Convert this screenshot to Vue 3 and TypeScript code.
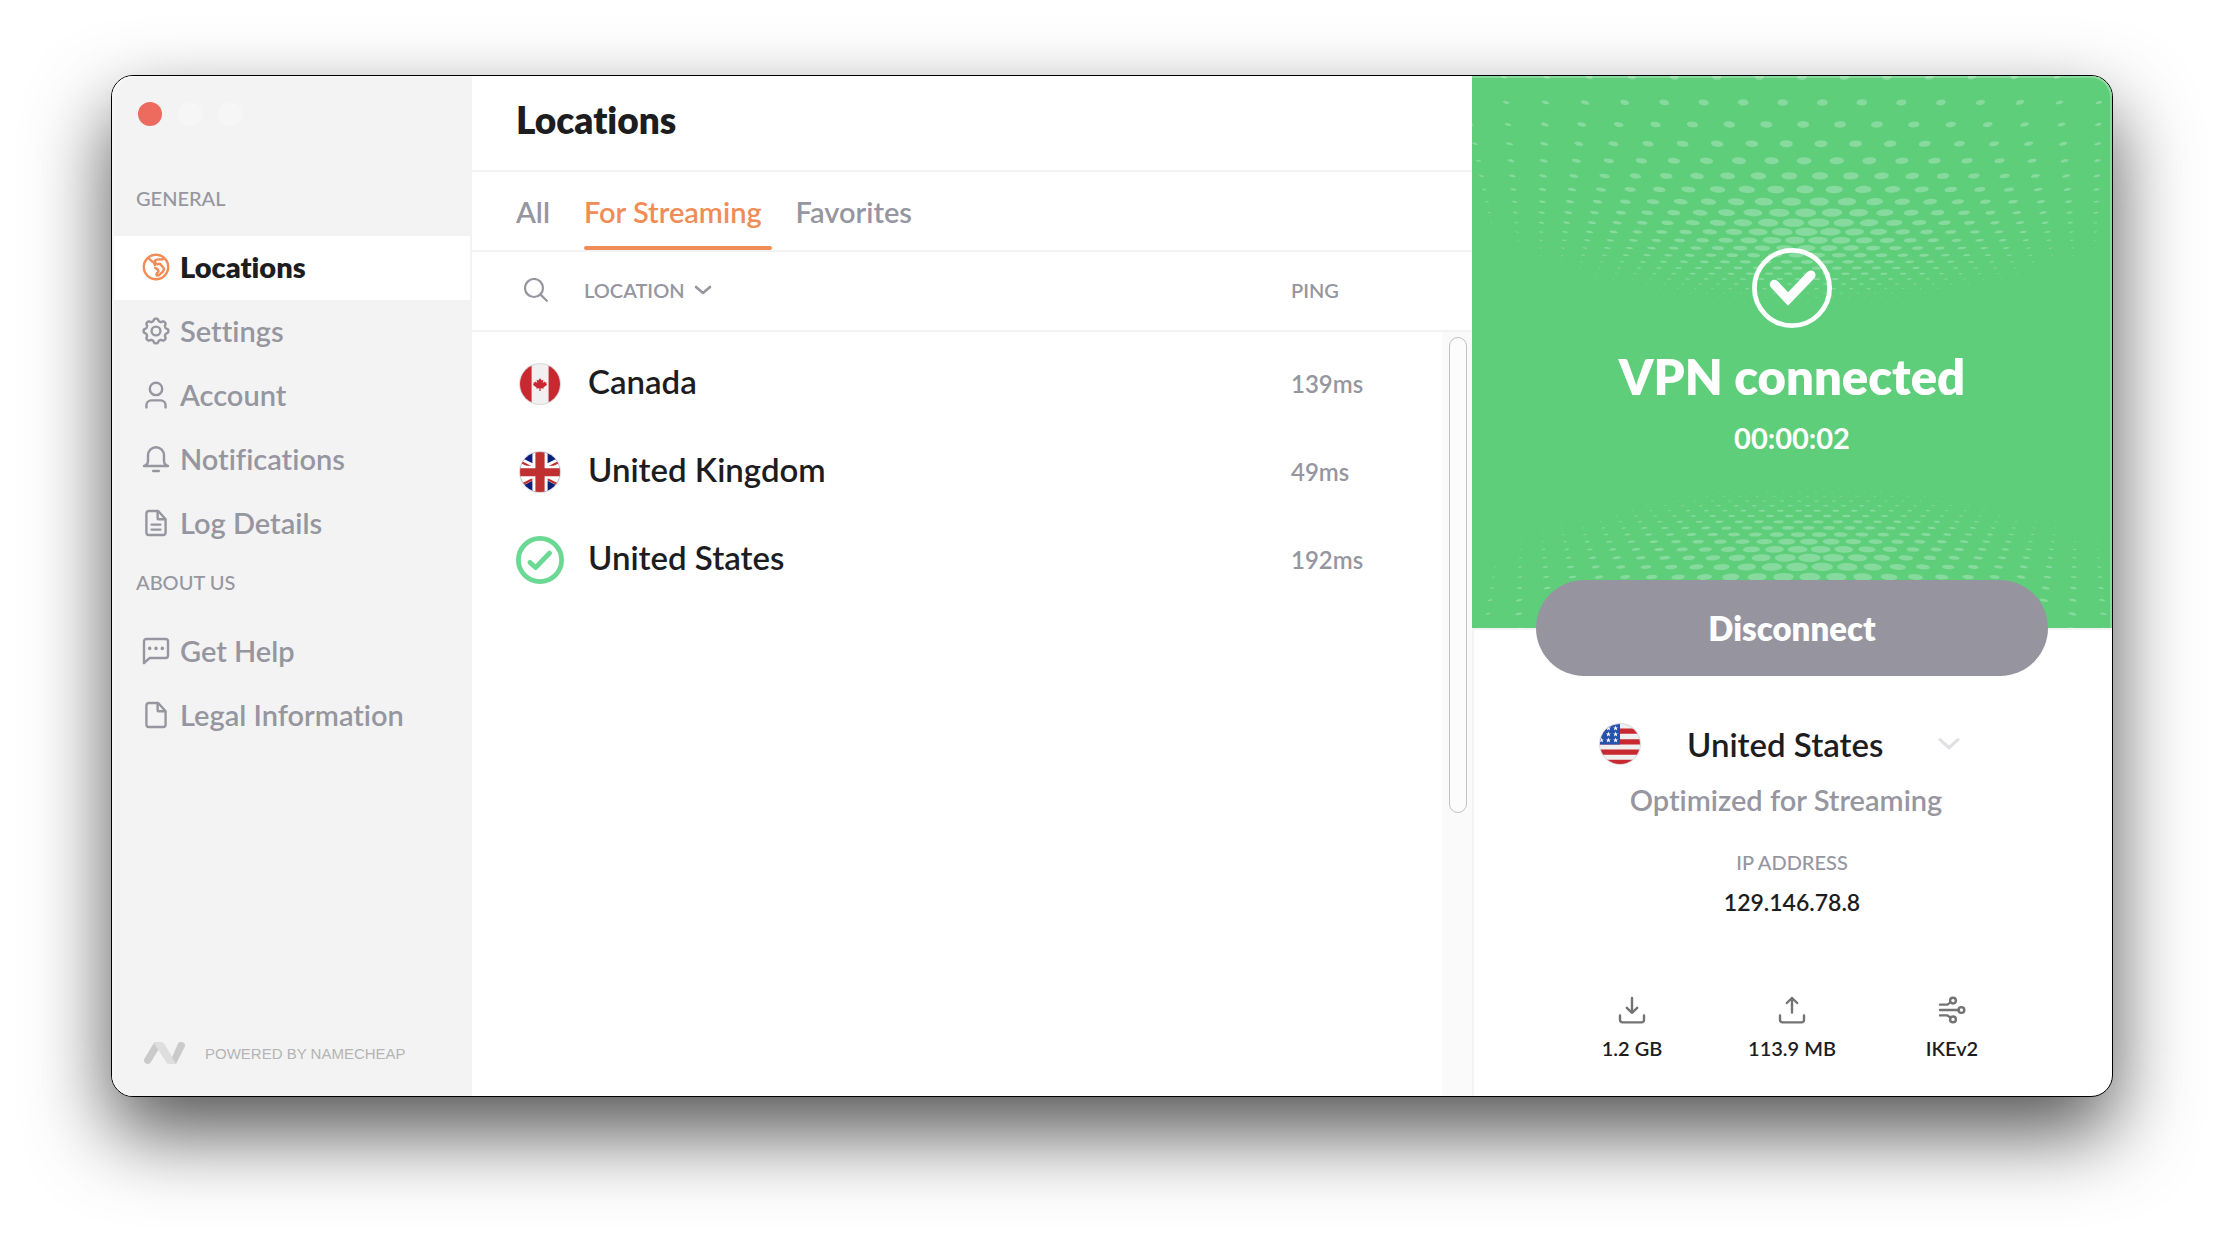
<script setup lang="ts">
import { ref } from 'vue'

interface NavItem {
  id: string
  label: string
}

interface Server {
  id: string
  name: string
  ping: string
}

interface Dot {
  key: string
  matrix: string
}

const generalItems: NavItem[] = [
  { id: 'globe', label: 'Locations' },
  { id: 'gear', label: 'Settings' },
  { id: 'user', label: 'Account' },
  { id: 'bell', label: 'Notifications' },
  { id: 'log', label: 'Log Details' },
]

const aboutItems: NavItem[] = [
  { id: 'chat', label: 'Get Help' },
  { id: 'file', label: 'Legal Information' },
]

const sections = [
  { title: 'General', items: generalItems },
  { title: 'About us', items: aboutItems },
]

const tabs = ['All', 'For Streaming', 'Favorites']

const servers: Server[] = [
  { id: 'ca', name: 'Canada', ping: '139ms' },
  { id: 'uk', name: 'United Kingdom', ping: '49ms' },
  { id: 'on', name: 'United States', ping: '192ms' },
]

const stats = [
  { id: 'down', label: '1.2 GB' },
  { id: 'up', label: '113.9 MB' },
  { id: 'proto', label: 'IKEv2' },
]

const activeItem = ref('globe')
const activeTab = ref('For Streaming')

// Outline of the cog: a circle whose radius swells eight times per turn.
function gearOutline(): string {
  const points: string[] = []
  for (let i = 0; i < 160; i++) {
    const t = (i / 160) * Math.PI * 2
    const wave = Math.tanh(1.6 * Math.cos(8 * t)) / Math.tanh(1.6)
    const r = 11.2 + 1.2 * wave
    points.push(`${(14 + r * Math.sin(t)).toFixed(2)} ${(14 - r * Math.cos(t)).toFixed(2)}`)
  }
  return `M${points.join('L')}Z`
}

const gearPath = gearOutline()

// Dot size, as a share of the grid step, by distance from the focus.
const falloff: [number, number][] = [
  [0, 0.94], [2, 0.8], [4, 0.6], [5, 0.52], [7, 0.38], [9, 0.27], [12, 0.12], [15, 0],
]

function dotShare(d: number): number {
  for (let i = 1; i < falloff.length; i++) {
    const [d0, f0] = falloff[i - 1]
    const [d1, f1] = falloff[i]
    if (d <= d1) return f0 + ((f1 - f0) * (d - d0)) / (d1 - d0)
  }
  return 0
}

// Round dots on a plane that recedes towards a horizon.
function dotPlane(): Dot[] {
  const horizon = 358
  const vanishX = 340
  const step = 0.1192
  const depth = 0.0002147
  const dots: Dot[] = []
  for (let n = 0; n < 26; n++) {
    const h = 1 / (0.0028011 + depth * n)
    const slope = depth * h * h
    const shift = n % 2 === 0 ? -0.24 : 0.26
    for (let c = -15; c <= 15; c++) {
      const u = c + shift
      const r = dotShare(Math.hypot(u + 0.2, n - 10)) / 2
      if (r < 0.012) continue
      const m = [step * h * r, 0, -step * u * slope * r, slope * r, vanishX + step * u * h, horizon - h]
      dots.push({ key: `${n}:${c}`, matrix: `matrix(${m.map((v) => v.toFixed(2)).join(' ')})` })
    }
  }
  return dots
}

const dots = dotPlane()
</script>

<template>
  <div class="desktop">
    <div class="window">
      <aside class="sidebar">
        <div class="lights">
          <span class="light close"></span>
          <span class="light"></span>
          <span class="light"></span>
        </div>
        <nav>
          <section v-for="section in sections" :key="section.title">
            <h2 class="group">{{ section.title }}</h2>
            <ul>
              <li v-for="item in section.items" :key="item.id">
                <a href="#" class="nav" :class="{ active: item.id === activeItem }" @click.prevent="activeItem = item.id">
                  <svg class="icon" viewBox="0 0 28 28" aria-hidden="true">
                    <g v-if="item.id === 'globe'">
                      <circle cx="14" cy="14" r="12.2" />
                      <path d="M6.4 5.2 10 8.4Q12.2 9 12.8 12M20.8 6.2 14.4 6.6Q12.8 7 13.2 8.8 13.8 11.4 15.4 11.2L18 10.8 22 15.6Q22 18.6 18.8 20.4 16.4 23.4 14.6 22.2 14 20.4 16.4 18.6 16.6 16.2 13.2 14.8" />
                    </g>
                    <g v-else-if="item.id === 'gear'">
                      <path :d="gearPath" />
                      <circle cx="14" cy="14" r="4.4" />
                    </g>
                    <g v-else-if="item.id === 'user'">
                      <circle cx="14" cy="7.9" r="6.2" />
                      <path d="M4.4 26.4V24.4a5 5 0 0 1 5-5h9.2a5 5 0 0 1 5 5v2" />
                    </g>
                    <g v-else-if="item.id === 'bell'">
                      <path d="M2 21Q6 19.6 6 16V10.2a8 8 0 0 1 16 0V16Q22 19.6 26 21ZM11.2 26h5.6" />
                    </g>
                    <g v-else-if="item.id === 'log' || item.id === 'file'">
                      <path d="M6.8 2h9.4l7.4 8.2V23.6a2.4 2.4 0 0 1-2.4 2.4H6.8a2.4 2.4 0 0 1-2.4-2.4V4.4A2.4 2.4 0 0 1 6.8 2ZM15.6 2.4V9.2a1 1 0 0 0 1 1h6.6" />
                      <path v-if="item.id === 'log'" d="M9.6 15.6h8.8M9.6 20.6h8.8" />
                    </g>
                    <g v-else>
                      <path d="M2 26.2V4.4A2.4 2.4 0 0 1 4.4 2h19.2A2.4 2.4 0 0 1 26 4.4V18.6A2.4 2.4 0 0 1 23.6 21H8.4Q7.4 21 6.6 21.8Z" />
                      <path class="solid" d="M7.7 9.6a1.8 1.8 0 1 0 .01 0ZM14 9.6a1.8 1.8 0 1 0 .01 0ZM20.3 9.6a1.8 1.8 0 1 0 .01 0Z" />
                    </g>
                  </svg>
                  <span>{{ item.label }}</span>
                </a>
              </li>
            </ul>
          </section>
        </nav>
        <footer class="powered">
          <svg class="brand" viewBox="0 0 41 22" aria-hidden="true">
            <path d="M3.8 18.2 12.6 3.6" stroke="#cacaca" stroke-width="7.4" stroke-linecap="round" />
            <path d="M10.4 0H17c1.6 0 3 .9 3.8 2.4L32.4 22h-7.2c-1.6 0-2.6-.8-3.4-2.2L13.4 6.6C12.6 5 10.2 3 10.4 0Z" fill="#dedede" />
            <path d="M33.9 1.9a3.7 3.7 0 0 1 6.6 3.4L32 22l-4-6.8Z" fill="#cacaca" />
          </svg>
          <span>POWERED BY NAMECHEAP</span>
        </footer>
      </aside>

      <main class="content">
        <header class="heading">
          <h1>Locations</h1>
        </header>
        <div class="tabs" role="tablist">
          <button
            v-for="tab in tabs"
            :key="tab"
            type="button"
            role="tab"
            class="tab"
            :class="{ current: tab === activeTab }"
            :aria-selected="tab === activeTab"
            @click="activeTab = tab"
          >
            {{ tab }}
          </button>
        </div>
        <div class="list">
          <table>
            <thead>
              <tr>
                <th class="col-icon">
                  <button type="button" class="search" aria-label="Search">
                    <svg viewBox="0 0 24 24" aria-hidden="true"><circle cx="10" cy="10" r="9" /><path d="M16.6 16.6 22.8 22.8" /></svg>
                  </button>
                </th>
                <th>
                  <button type="button" class="sort">
                    LOCATION
                    <svg viewBox="0 0 18 10" aria-hidden="true"><path d="M2 2 9 8 16 2" /></svg>
                  </button>
                </th>
                <th class="col-ping">PING</th>
              </tr>
            </thead>
            <tbody>
              <tr v-for="server in servers" :key="server.id">
                <td class="mark">
                  <svg v-if="server.id === 'ca'" class="flag" viewBox="0 0 42 42" aria-hidden="true">
                    <clipPath id="clip-ca"><circle cx="21" cy="21" r="20" /></clipPath>
                    <circle cx="21" cy="21" r="21" fill="#d9d9d9" />
                    <g clip-path="url(#clip-ca)">
                      <path d="M0 0h42v42H0Z" fill="#f0f0f0" />
                      <path d="M0 0h12.6v42H0ZM29.6 0H42v42H29.6Z" fill="#c8282f" />
                      <path d="M21 15l1.6 2.6 1.8-.8-.6 3.2 1.8-1.6.6 1.2 1.6-.2-.6 1.6 1 .8-3.8 2.6.4 1.2-3.2-.4V28h-1.2v-2.8l-3.2.4.4-1.2-3.8-2.6 1-.8-.6-1.6 1.6.2.6-1.2 1.8 1.6-.6-3.2 1.8.8Z" fill="#c8282f" />
                    </g>
                  </svg>
                  <svg v-else-if="server.id === 'uk'" class="flag" viewBox="0 0 42 42" aria-hidden="true">
                    <clipPath id="clip-uk"><circle cx="21" cy="21" r="20" /></clipPath>
                    <circle cx="21" cy="21" r="21" fill="#d9d9d9" />
                    <g clip-path="url(#clip-uk)">
                      <path d="M0 0h42v42H0Z" fill="#0a1f7c" />
                      <path d="M-9 6 51 36M-9 36 51 6" stroke="#fff" stroke-width="9" />
                      <path d="M-9 4 21 19M21 23 51 38M-9 38 21 23M21 19 51 4" stroke="#bf3130" stroke-width="2.2" transform="translate(0 1.6)" />
                      <path d="M13.4 0h15.2v42H13.4ZM0 14.8h42v12.6H0Z" fill="#fff" />
                      <path d="M16.4 0h9.2v42h-9.2ZM0 17.2h42v8H0Z" fill="#bf3130" />
                    </g>
                  </svg>
                  <svg v-else class="tick" viewBox="0 0 48 48" aria-hidden="true">
                    <circle cx="24" cy="24" r="21.6" stroke-width="4.8" />
                    <path d="M14 26.4 19.6 31.6 33.6 17" stroke-width="4.8" />
                  </svg>
                </td>
                <td class="name">{{ server.name }}</td>
                <td class="ping">{{ server.ping }}</td>
              </tr>
            </tbody>
          </table>
          <div class="track"><div class="thumb"></div></div>
        </div>
      </main>

      <aside class="status">
        <div class="hero">
          <svg class="pattern" viewBox="0 0 640 552" preserveAspectRatio="xMidYMid slice" aria-hidden="true">
            <g fill="#87da9d">
              <circle v-for="dot in dots" :key="dot.key" r="1" :transform="dot.matrix" />
            </g>
            <g fill="#87da9d" transform="translate(671.6 637.7) rotate(180)">
              <circle v-for="dot in dots" :key="dot.key" r="1" :transform="dot.matrix" />
            </g>
          </svg>
          <svg class="badge" viewBox="0 0 80 80" aria-hidden="true">
            <circle cx="40" cy="40" r="37.6" stroke-width="4.8" />
            <path d="M22.4 36.4 36 51 59 27" stroke-width="9.2" stroke-linecap="round" />
          </svg>
          <p class="state">VPN connected</p>
          <p class="timer">00:00:02</p>
        </div>
        <div class="details">
          <button type="button" class="disconnect">Disconnect</button>
          <button type="button" class="picker">
            <svg class="flag" viewBox="0 0 42 42" aria-hidden="true">
              <clipPath id="clip-us"><circle cx="21" cy="21" r="20" /></clipPath>
              <circle cx="21" cy="21" r="21" fill="#d9d9d9" />
              <g clip-path="url(#clip-us)">
                <path d="M0 0h42v42H0Z" fill="#f0f0f0" />
                <path d="M0 5.6h42v5.2H0ZM0 16.2h42v5.2H0ZM0 26.6h42v5.2H0ZM0 36.8h42V42H0Z" fill="#c8282f" />
                <path d="M0 0h21v21.4H0Z" fill="#2452ac" />
                <g fill="#fff">
                  <path
                    v-for="star in ['9.4 5.2', '16.6 5.2', '9.4 11.2', '16.6 11.2', '2.4 17.2', '9.4 17.2', '16.6 17.2']"
                    :key="star"
                    :transform="`translate(${star})`"
                    d="M0-2.6.7-.8 2.5-.8 1.1.4 1.6 2.2 0 1.1-1.6 2.2-1.1.4-2.5-.8-.7-.8Z"
                  />
                </g>
              </g>
            </svg>
            <span>United States</span>
            <svg class="caret" viewBox="0 0 24 14" aria-hidden="true"><path d="M3 2.6 12 10.8 21 2.6" /></svg>
          </button>
          <p class="note">Optimized for Streaming</p>
          <p class="ip-label">IP ADDRESS</p>
          <p class="ip">129.146.78.8</p>
          <ul class="stats">
            <li v-for="stat in stats" :key="stat.id">
              <svg viewBox="0 0 28 28" aria-hidden="true">
                <path v-if="stat.id !== 'proto'" d="M2 19.4V24a2.4 2.4 0 0 0 2.4 2.4h19.2A2.4 2.4 0 0 0 26 24v-4.6" />
                <path v-if="stat.id === 'down'" d="M14 2v14.6M8.8 11.8 14 16.8 19.2 11.8" />
                <path v-else-if="stat.id === 'up'" d="M14 16.6V2M8.8 7 14 2 19.2 7" />
                <g v-else>
                  <path d="M2 8.6H9.4L12.4 6.4M2 14H20.6M2 19.4H9.4L12.4 21.4" />
                  <circle cx="15" cy="4.6" r="2.9" />
                  <circle cx="23.4" cy="14" r="2.9" />
                  <circle cx="15" cy="23.4" r="2.9" />
                </g>
              </svg>
              <span>{{ stat.label }}</span>
            </li>
          </ul>
        </div>
      </aside>
    </div>
  </div>
</template>

<style>
body {
  margin: 0;
  background: #fff;
}
</style>

<style scoped>
* {
  box-sizing: border-box;
}

h1,
h2,
p,
ul {
  margin: 0;
  padding: 0;
}

ul {
  list-style: none;
}

button {
  margin: 0;
  padding: 0;
  border: 0;
  background: none;
  color: inherit;
  font: inherit;
  cursor: pointer;
}

svg {
  display: block;
  flex: none;
  fill: none;
}

.desktop {
  display: flex;
  min-height: 100vh;
  padding: 75px 111px 147px;
  overflow: hidden;
  font-family: Lato, "Open Sans", sans-serif;
  font-variant-ligatures: none;
  font-weight: 600;
  color: #1d1d1f;
}

.window {
  position: relative;
  display: grid;
  flex: 1;
  grid-template-columns: 360px 1fr 640px;
  overflow: hidden;
  border: 1px solid #000;
  border-radius: 22px;
  background: #fff;
  box-shadow: 0 36px 80px rgba(0, 0, 0, 0.67);
}

.window::after {
  content: "";
  position: absolute;
  inset: 0;
  border: 2px solid rgba(255, 255, 255, 0.25);
  border-bottom-width: 0;
  border-radius: 21px;
  pointer-events: none;
}

.sidebar {
  display: flex;
  flex-direction: column;
  padding: 0 2px;
  background: #f3f3f3;
  color: #9696a0;
}

.lights {
  display: flex;
  gap: 16px;
  height: 96px;
  padding: 26px 24px;
}

.light {
  width: 24px;
  height: 24px;
  border-radius: 50%;
  background: #f6f6f6;
}

.close {
  background: #ed6a5e;
}

.group {
  height: 64px;
  padding-left: 22px;
  font-size: 20px;
  font-weight: 500;
  line-height: 52px;
  text-transform: uppercase;
}

.nav {
  display: flex;
  align-items: center;
  gap: 10px;
  height: 64px;
  padding: 0 0 2px 28px;
  color: inherit;
  font-size: 29px;
  line-height: 36px;
  text-decoration: none;
}

.nav.active {
  background: #fff;
  color: #1d1d1f;
  font-weight: 800;
}

.icon {
  width: 28px;
  height: 28px;
  stroke: #9696a0;
  stroke-width: 2.4;
  stroke-linecap: round;
  stroke-linejoin: round;
}

.active .icon {
  stroke: #f08c55;
}

.icon .solid {
  fill: #9696a0;
  stroke: none;
}

.powered {
  display: flex;
  align-items: center;
  gap: 20px;
  margin-top: auto;
  padding: 0 30px 32px;
  font-family: "Liberation Sans", Arial, sans-serif;
  font-size: 15px;
  font-weight: 400;
  color: #b4b4b4;
}

.brand {
  width: 41px;
  height: 22px;
}

.content {
  display: flex;
  flex-direction: column;
}

.heading {
  height: 96px;
  padding: 22px 44px 0;
  border-bottom: 2px solid #f3f3f3;
}

h1 {
  font-size: 37px;
  font-weight: 800;
  line-height: 44px;
}

.tabs {
  display: flex;
  gap: 24px;
  height: 80px;
  padding: 0 44px;
  border-bottom: 2px solid #f3f3f3;
}

.tab {
  position: relative;
  padding: 0 10px 0 0;
  color: #9696a0;
  font-size: 29px;
}

.tab.current {
  color: #f08c55;
}

.tab.current::after {
  content: "";
  position: absolute;
  right: 0;
  bottom: 0;
  left: 0;
  height: 4px;
  border-radius: 2px;
  background: #f08c55;
}

.list {
  display: grid;
  flex: 1;
  grid-template-columns: 1fr 30px;
}

table {
  grid-area: 1 / 1 / 2 / 3;
  align-self: start;
  width: 100%;
  border-spacing: 0;
  table-layout: fixed;
}

th {
  height: 80px;
  padding: 0 0 2px;
  border-bottom: 2px solid #f3f3f3;
  color: #9696a0;
  font-size: 20px;
  font-weight: 600;
  text-align: left;
}

.col-icon {
  width: 112px;
  padding-left: 52px;
}

.col-ping {
  width: 181px;
}

.search {
  display: block;
}

.search svg {
  width: 24px;
  height: 24px;
  stroke: #9696a0;
  stroke-width: 2.2;
  stroke-linecap: round;
}

.sort {
  display: flex;
  align-items: center;
  gap: 9px;
}

.sort svg {
  width: 18px;
  height: 10px;
  stroke: #9696a0;
  stroke-width: 2.6;
  stroke-linecap: round;
  stroke-linejoin: round;
}

tbody::before {
  content: "";
  display: block;
  height: 8px;
}

td {
  height: 88px;
  padding: 0;
}

.mark {
  padding-left: 44px;
}

.flag {
  width: 42px;
  height: 42px;
}

.mark .flag {
  margin-left: 3px;
}

.tick {
  width: 48px;
  height: 48px;
  stroke: #6bd893;
  stroke-linecap: round;
  stroke-linejoin: round;
}

.name {
  padding: 0 0 6px 4px;
  font-size: 33px;
}

.ping {
  padding-bottom: 2px;
  color: #9696a0;
  font-size: 24px;
}

.track {
  grid-area: 1 / 2;
  margin-top: 80px;
  padding: 5px 5px 0 7px;
  background: #fafafa;
}

.thumb {
  height: 476px;
  border: 1px solid #c2c2c2;
  border-radius: 9px;
  background: #fcfcfc;
}

.status {
  display: flex;
  flex-direction: column;
  text-align: center;
}

.hero {
  position: relative;
  display: flex;
  flex-direction: column;
  align-items: center;
  height: 552px;
  padding-top: 172px;
  background: #5fce7b;
  color: #fff;
}

.pattern {
  position: absolute;
  inset: 0;
  width: 100%;
  height: 100%;
}

.badge {
  position: relative;
  width: 80px;
  height: 80px;
  stroke: #fff;
}

.state {
  position: relative;
  margin-top: 18px;
  font-size: 49px;
  font-weight: 800;
  line-height: 60px;
}

.timer {
  position: relative;
  margin-top: 14px;
  font-size: 29px;
  font-weight: 700;
  line-height: 36px;
}

.details {
  position: relative;
  display: flex;
  flex: 1;
  flex-direction: column;
  align-items: center;
  box-shadow: inset 2px 2px 0 #f3f3f3;
}

.disconnect {
  width: 80%;
  height: 96px;
  margin-top: -48px;
  border-radius: 48px;
  background: #96959f;
  color: #fff;
  font-size: 33px;
  font-weight: 800;
}

.picker {
  display: flex;
  align-items: center;
  gap: 46px;
  width: 362px;
  margin-top: 46px;
  margin-right: 24px;
  font-size: 33px;
  line-height: 44px;
}

.caret {
  width: 24px;
  height: 14px;
  margin-left: auto;
  stroke: #e1e1e5;
  stroke-width: 3.2;
  stroke-linecap: round;
  stroke-linejoin: round;
}

.note {
  margin-top: 16px;
  margin-right: 12px;
  color: #9696a0;
  font-size: 29px;
  line-height: 36px;
}

.ip-label {
  margin-top: 32px;
  color: #9696a0;
  font-size: 20px;
  font-weight: 500;
  line-height: 24px;
}

.ip {
  margin-top: 14px;
  font-size: 23px;
  line-height: 28px;
}

.stats {
  display: grid;
  grid-template-columns: repeat(3, 160px);
  margin-top: auto;
  padding-bottom: 36px;
}

.stats li {
  display: flex;
  flex-direction: column;
  align-items: center;
  gap: 12px;
  font-size: 20px;
  line-height: 24px;
}

.stats svg {
  width: 28px;
  height: 28px;
  stroke: #737373;
  stroke-width: 2.4;
  stroke-linecap: round;
  stroke-linejoin: round;
}
</style>
